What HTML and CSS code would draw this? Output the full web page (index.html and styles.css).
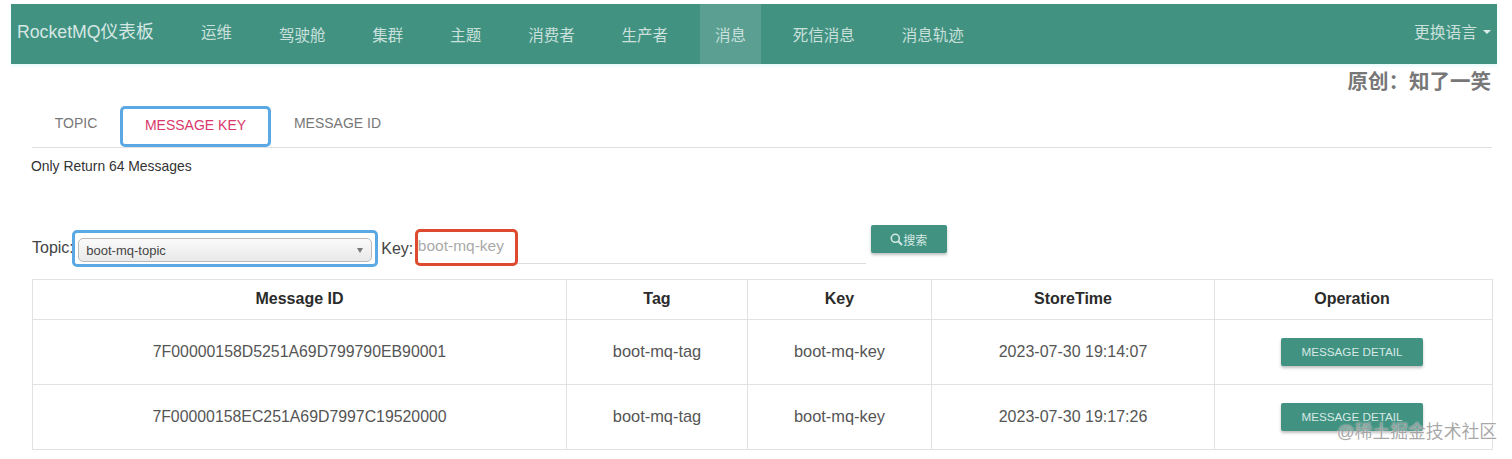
FILE: index.html
```html
<!DOCTYPE html>
<html lang="en">
<head>
    <meta charset="UTF-8">
    <meta name="viewport" content="width=device-width, initial-scale=1.0">
    <title>RocketMQ</title>
    <link rel="stylesheet" href="styles.css">
</head>
<body>
    <nav class="navbar">
        <a class="brand">RocketMQ仪表板</a>
        <ul class="nav-list">
            <li class="nav-item nav-item-raised">运维</li>
            <li class="nav-item">驾驶舱</li>
            <li class="nav-item">集群</li>
            <li class="nav-item">主题</li>
            <li class="nav-item">消费者</li>
            <li class="nav-item">生产者</li>
            <li class="nav-item active">消息</li>
            <li class="nav-item">死信消息</li>
            <li class="nav-item">消息轨迹</li>
        </ul>
        <div class="lang">更换语言<span class="lang-caret"></span></div>
    </nav>

    <main class="content">
        <div class="credit">原创：知了一笑</div>

        <div class="tabs">
            <div class="tab">TOPIC</div>
            <div class="tab tab-active">MESSAGE KEY</div>
            <div class="tab">MESSAGE ID</div>
        </div>

        <p class="notice">Only Return 64 Messages</p>

        <form class="search-form">
            <label class="field-label">Topic:</label>
            <div class="blue-box">
                <div class="select-wrap">
                    <select class="topic-select">
                        <option>boot-mq-topic</option>
                    </select>
                </div>
            </div>
            <label class="field-label key-label">Key:</label>
            <div class="key-field">
                <input class="key-input" placeholder="boot-mq-key">
                <span class="red-box"></span>
            </div>
            <button class="btn btn-search" type="button">
                <svg class="search-icon" width="13" height="13" viewBox="0 0 13 13" fill="none" stroke="currentColor">
                    <circle cx="5.3" cy="5.3" r="4" stroke-width="1.6"/>
                    <path d="M8.3 8.3L12 12" stroke-width="2"/>
                </svg>搜索
            </button>
        </form>

        <table class="result-table">
            <colgroup>
                <col class="col-id">
                <col class="col-tag">
                <col class="col-key">
                <col class="col-time">
                <col class="col-op">
            </colgroup>
            <thead>
                <tr>
                    <th>Message ID</th>
                    <th>Tag</th>
                    <th>Key</th>
                    <th>StoreTime</th>
                    <th>Operation</th>
                </tr>
            </thead>
            <tbody>
                <tr>
                    <td class="cell-id">7F00000158D5251A69D799790EB90001</td>
                    <td class="cell-wide">boot-mq-tag</td>
                    <td class="cell-wide">boot-mq-key</td>
                    <td>2023-07-30 19:14:07</td>
                    <td><button class="btn btn-detail" type="button">MESSAGE DETAIL</button></td>
                </tr>
                <tr>
                    <td class="cell-id">7F00000158EC251A69D7997C19520000</td>
                    <td class="cell-wide">boot-mq-tag</td>
                    <td class="cell-wide">boot-mq-key</td>
                    <td>2023-07-30 19:17:26</td>
                    <td><button class="btn btn-detail" type="button">MESSAGE DETAIL</button></td>
                </tr>
            </tbody>
        </table>
    </main>

    <div class="watermark">@稀土掘金技术社区</div>
</body>
</html>
```

FILE: styles.css
```css
html, body {
    height: 100%;
}

body {
    margin: 0;
    padding: 4px 15px 0 11px;
    box-sizing: border-box;
    overflow: hidden;
    position: relative;
    background: #fff;
    color: #333;
    font-family: "Liberation Sans", "Noto Sans CJK SC", sans-serif;
}

/* Top bar */
.navbar {
    display: flex;
    align-items: stretch;
    height: 60px;
    padding: 0 6px;
    background: #429282;
    color: #c9e0db;
    box-shadow: 0 2px 3px rgba(150, 240, 230, 0.25);
}

.brand {
    display: flex;
    align-items: center;
    width: 169px;
    padding-bottom: 8px;
    box-sizing: border-box;
    font-size: 17.7px;
    color: #d5e7e3;
}

.nav-list {
    display: flex;
    gap: 16.9px;
    margin: 0;
    padding: 0;
    list-style: none;
}

.nav-item {
    display: flex;
    align-items: center;
    padding: 0 15px;
    font-size: 15.5px;
}

.nav-item-raised {
    padding-bottom: 6px;
}

.nav-item.active {
    background: #5a9f92;
}

.lang {
    display: flex;
    align-items: center;
    gap: 6px;
    margin-left: auto;
    padding-bottom: 6px;
    font-size: 15.75px;
}

.lang-caret {
    width: 0;
    height: 0;
    margin-top: 2px;
    border-top: 4px solid #dcebe8;
    border-left: 4px solid transparent;
    border-right: 4px solid transparent;
}

/* Page body */
.content {
    position: relative;
    padding: 42px 5px 0 21px;
}

.credit {
    position: absolute;
    top: 1px;
    right: 6px;
    font-size: 20.5px;
    font-weight: bold;
    color: #777;
}

.tabs {
    display: flex;
    align-items: stretch;
    height: 41px;
    border-bottom: 1px solid #e0e0e0;
}

.tab {
    display: flex;
    align-items: center;
    justify-content: center;
    font-size: 14px;
    color: #777;
    box-sizing: border-box;
    padding-bottom: 8px;
}

.tab:first-child {
    width: 88px;
}

.tab:last-child {
    width: 133px;
}

.tab-active {
    width: 151px;
    color: #d8386b;
    border: 3px solid #5ba9e4;
    border-radius: 5px;
    height: 41px;
    padding-bottom: 4px;
}

.notice {
    margin: 10px 0 0 -1px;
    font-size: 13.9px;
    line-height: 16px;
    color: #333;
}

/* Search row */
.search-form {
    display: flex;
    align-items: flex-start;
    height: 54px;
    margin-top: 51px;
}

.field-label {
    margin-top: 14px;
    font-size: 16px;
    line-height: 18px;
    color: #444;
}

.blue-box {
    width: 306px;
    height: 37px;
    margin: 5px 0 0 -1.5px;
    padding: 5px 3px 0 3px;
    box-sizing: border-box;
    border: 3px solid #5ba9e4;
    border-radius: 5px;
}

.select-wrap {
    position: relative;
}

.select-wrap::after {
    content: "";
    position: absolute;
    top: 10px;
    right: 9px;
    border-top: 5px solid #777;
    border-left: 3px solid transparent;
    border-right: 3px solid transparent;
}

.topic-select {
    display: block;
    width: 100%;
    height: 24px;
    padding: 0 7px;
    appearance: none;
    border: 1px solid #bbb;
    border-radius: 5px;
    background: linear-gradient(#fafafa, #e9e9e9);
    color: #444;
    font-family: inherit;
    font-size: 13px;
}

.key-label {
    margin-left: 3px;
    margin-top: 15px;
}

.key-field {
    position: relative;
    width: 451px;
    height: 39px;
    margin: 0 0 0 1.5px;
    padding-top: 4px;
    box-sizing: border-box;
    border-bottom: 1px solid #ddd;
}

.key-input {
    display: block;
    width: 100%;
    height: 33px;
    padding: 0 3px;
    box-sizing: border-box;
    border: 0;
    outline: 0;
    background: transparent;
    font-family: inherit;
    font-size: 15.5px;
}

.key-input::placeholder {
    color: #aaa;
}

.red-box {
    position: absolute;
    top: 4px;
    left: 0;
    width: 103px;
    height: 37px;
    box-sizing: border-box;
    border: 3px solid #dd4a2f;
    border-radius: 5px;
}

.btn {
    border: 0;
    border-radius: 2px;
    background: #429282;
    color: #d5e9e4;
    font-family: inherit;
    box-shadow: 0 2px 3px rgba(0, 0, 0, 0.25);
}

.btn-search {
    display: flex;
    align-items: center;
    justify-content: center;
    width: 76px;
    height: 28px;
    margin: 0 0 0 5px;
    padding: 0;
    font-size: 12px;
}

.search-icon {
    display: block;
}

/* Result table */
.result-table {
    width: 1460px;
    margin-top: 0;
    border-collapse: collapse;
    table-layout: fixed;
    font-size: 16px;
}

.col-id { width: 534px; }
.col-tag { width: 181px; }
.col-key { width: 184px; }
.col-time { width: 283px; }
.col-op { width: 278px; }

.result-table th,
.result-table td {
    border: 1px solid #e2e2e2;
    padding: 0;
    text-align: center;
}

.result-table th {
    height: 38px;
    padding-bottom: 1px;
    color: #2b2b2b;
    font-size: 16px;
}

.result-table td {
    height: 63px;
    padding-bottom: 1px;
    color: #555;
    font-size: 16px;
}

.result-table th:last-child,
.result-table td:last-child {
    padding-right: 3px;
}

.result-table .cell-id {
    font-size: 15.85px;
}

.result-table .cell-wide {
    font-size: 16.4px;
}

.btn-detail {
    display: inline-block;
    width: 142px;
    height: 28px;
    font-size: 11.7px;
}

/* Site watermark over the corner */
.watermark {
    position: absolute;
    right: 15px;
    bottom: 17px;
    font-size: 17.8px;
    line-height: 20px;
    color: rgba(140, 140, 140, 0.75);
    text-shadow: 0 0 2px rgba(255, 255, 255, 0.9);
}
```
